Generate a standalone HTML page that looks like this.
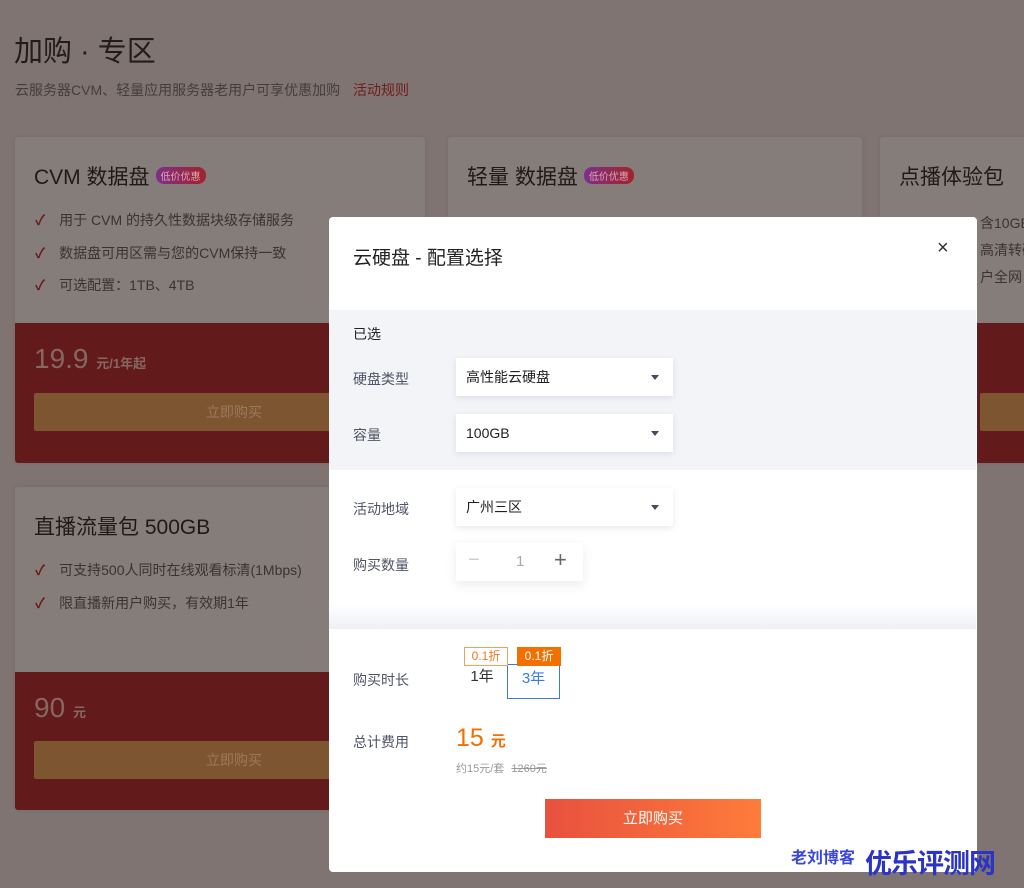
<!DOCTYPE html>
<html><head><meta charset="utf-8"><style>
*{margin:0;padding:0;box-sizing:border-box}
body{width:1024px;height:888px;overflow:hidden;background:#7f7471;font-family:"Liberation Sans","Noto Sans CJK SC",sans-serif;position:relative}
.abs{position:absolute}
.card{position:absolute;background:#857d7a;border-radius:3px;overflow:hidden;box-shadow:0 0 6px rgba(0,0,0,.08)}
.card h3{position:absolute;left:19px;top:24px;font-size:21px;font-weight:normal;color:#1e1a19}
.tag{display:inline-block;font-size:10px;color:#d9a9b0;background:linear-gradient(90deg,#7e2f8a,#a4222a);border-radius:8px;padding:1px 5px;vertical-align:4px;margin-left:6px}
.li{position:absolute;left:20px;font-size:14px;color:#3a3331}
.li:before{content:"✓";color:#6a1a1b;font-weight:bold;margin-right:14px}
.red{position:absolute;left:0;right:0;background:#621a1b}
.price{position:absolute;left:19px;font-size:28px;color:#866861}
.price small{font-size:13px;font-weight:bold}
.gold{position:absolute;left:19px;right:0;height:38px;background:#7d5530;border-radius:2px;color:#9a7a5c;font-size:14px;text-align:center;line-height:38px}
.modal{position:absolute;left:329px;top:217px;width:648px;height:655px;background:#fff;border-radius:4px;overflow:hidden}
.lbl{position:absolute;left:24px;font-size:14px;color:#4f5566}
.sel{position:absolute;left:127px;width:217px;height:38px;background:#fff;box-shadow:0 2px 6px rgba(60,70,100,.12);font-size:14px;color:#222;line-height:38px;padding-left:10px}
.sel:after{content:"";position:absolute;right:14px;top:17px;border:4px solid transparent;border-top:5px solid #444b5c;border-bottom:0}
</style></head><body>
<div class="abs" style="left:14px;top:28px;font-size:29px;color:#231c1b">加购 · 专区</div>
<div class="abs" style="left:15px;top:80px;font-size:14px;color:#463d3b">云服务器CVM、轻量应用服务器老用户可享优惠加购 <span style="color:#6e1d1e;margin-left:9px">活动规则</span></div>

<div class="card" style="left:15px;top:137px;width:410px;height:326px">
<h3>CVM 数据盘<span class="tag">低价优惠</span></h3>
<div class="li" style="top:73px">用于 CVM 的持久性数据块级存储服务</div>
<div class="li" style="top:106px">数据盘可用区需与您的CVM保持一致</div>
<div class="li" style="top:138px">可选配置：1TB、4TB</div>
<div class="red" style="top:186px;height:140px"><div class="price" style="top:20px">19.9 <small>元/1年起</small></div><div class="gold" style="top:70px;right:0;width:400px">立即购买</div></div>
</div>
<div class="card" style="left:448px;top:137px;width:414px;height:326px">
<h3>轻量 数据盘<span class="tag">低价优惠</span></h3>
<div class="red" style="top:186px;height:140px"></div>
</div>
<div class="card" style="left:880px;top:137px;width:160px;height:326px">
<h3>点播体验包</h3>
<div class="abs" style="left:100px;top:73px;font-size:14px;color:#3a3331;white-space:nowrap;line-height:27px">含10GB流量+<br>高清转码<br>户全网</div>
<div class="red" style="top:186px;height:140px"><div class="gold" style="top:70px;left:100px;background:#7d5530"></div></div>
</div>
<div class="card" style="left:15px;top:487px;width:410px;height:323px">
<h3>直播流量包 500GB</h3>
<div class="li" style="top:73px">可支持500人同时在线观看标清(1Mbps)</div>
<div class="li" style="top:106px">限直播新用户购买，有效期1年</div>
<div class="red" style="top:185px;height:138px"><div class="price" style="top:20px">90 <small>元</small></div><div class="gold" style="top:69px;width:400px">立即购买</div></div>
</div>

<div class="modal">
<div class="abs" style="left:24px;top:26px;font-size:19px;color:#222">云硬盘 - 配置选择</div>
<div class="abs" style="left:608px;top:20px;font-size:20px;color:#333">×</div>
<div class="abs" style="left:0;top:93px;width:647px;height:160px;background:#f3f4f8"></div>
<div class="lbl" style="top:107px;color:#222">已选</div>
<div class="lbl" style="top:152px">硬盘类型</div><div class="sel" style="top:141px">高性能云硬盘</div>
<div class="lbl" style="top:208px">容量</div><div class="sel" style="top:197px">100GB</div>
<div class="lbl" style="top:282px">活动地域</div><div class="sel" style="top:271px">广州三区</div>
<div class="lbl" style="top:338px">购买数量</div>
<div class="abs" style="left:127px;top:326px;width:127px;height:38px;box-shadow:0 4px 10px rgba(60,70,100,.1);font-size:15px;color:#aaa">
<span class="abs" style="left:12px;top:6px;font-size:20px;color:#ccc">−</span><span class="abs" style="left:60px;top:10px">1</span><span class="abs" style="left:98px;top:4px;font-size:22px;color:#666">+</span></div>
<div class="abs" style="left:0;top:388px;width:647px;height:24px;background:linear-gradient(#fff,#eef0f5)"></div>
<div class="lbl" style="top:453px">购买时长</div>
<div class="abs" style="left:125px;top:449px;width:56px;height:33px;text-align:center;line-height:22px;font-size:15px;color:#333">1年</div>
<div class="abs" style="left:178px;top:447px;width:53px;height:35px;border:1px solid #3a7be0;text-align:center;line-height:28px;font-size:15px;color:#3a7be0">3年</div>
<div class="abs" style="left:135px;top:430px;width:44px;height:19px;border:1px solid #f5a05a;background:#fff;color:#f07820;font-size:12px;text-align:center;line-height:17px">0.1折</div>
<div class="abs" style="left:188px;top:430px;width:44px;height:19px;background:#f36f00;color:#fff;font-size:12px;text-align:center;line-height:19px">0.1折</div>
<div class="lbl" style="top:515px">总计费用</div>
<div class="abs" style="left:127px;top:507px;font-size:25px;color:#f36f00">15 <span style="font-size:15px;font-weight:bold">元</span></div>
<div class="abs" style="left:127px;top:543px;font-size:11px;color:#999">约15元/套 <s style="margin-left:4px">1260元</s></div>
<div class="abs" style="left:216px;top:582px;width:216px;height:39px;background:linear-gradient(90deg,#e8513e,#fe7c3a);color:#fff;font-size:15px;text-align:center;line-height:39px">立即购买</div>
</div>
<div class="abs" style="left:791px;top:844px;font-size:16px;font-weight:bold;color:#3a46d8">老刘博客</div>
<div class="abs" style="left:865px;top:842px;font-size:27px;font-weight:bold;color:#2c34c8;letter-spacing:-1px">优乐评测网</div>
</body></html>
